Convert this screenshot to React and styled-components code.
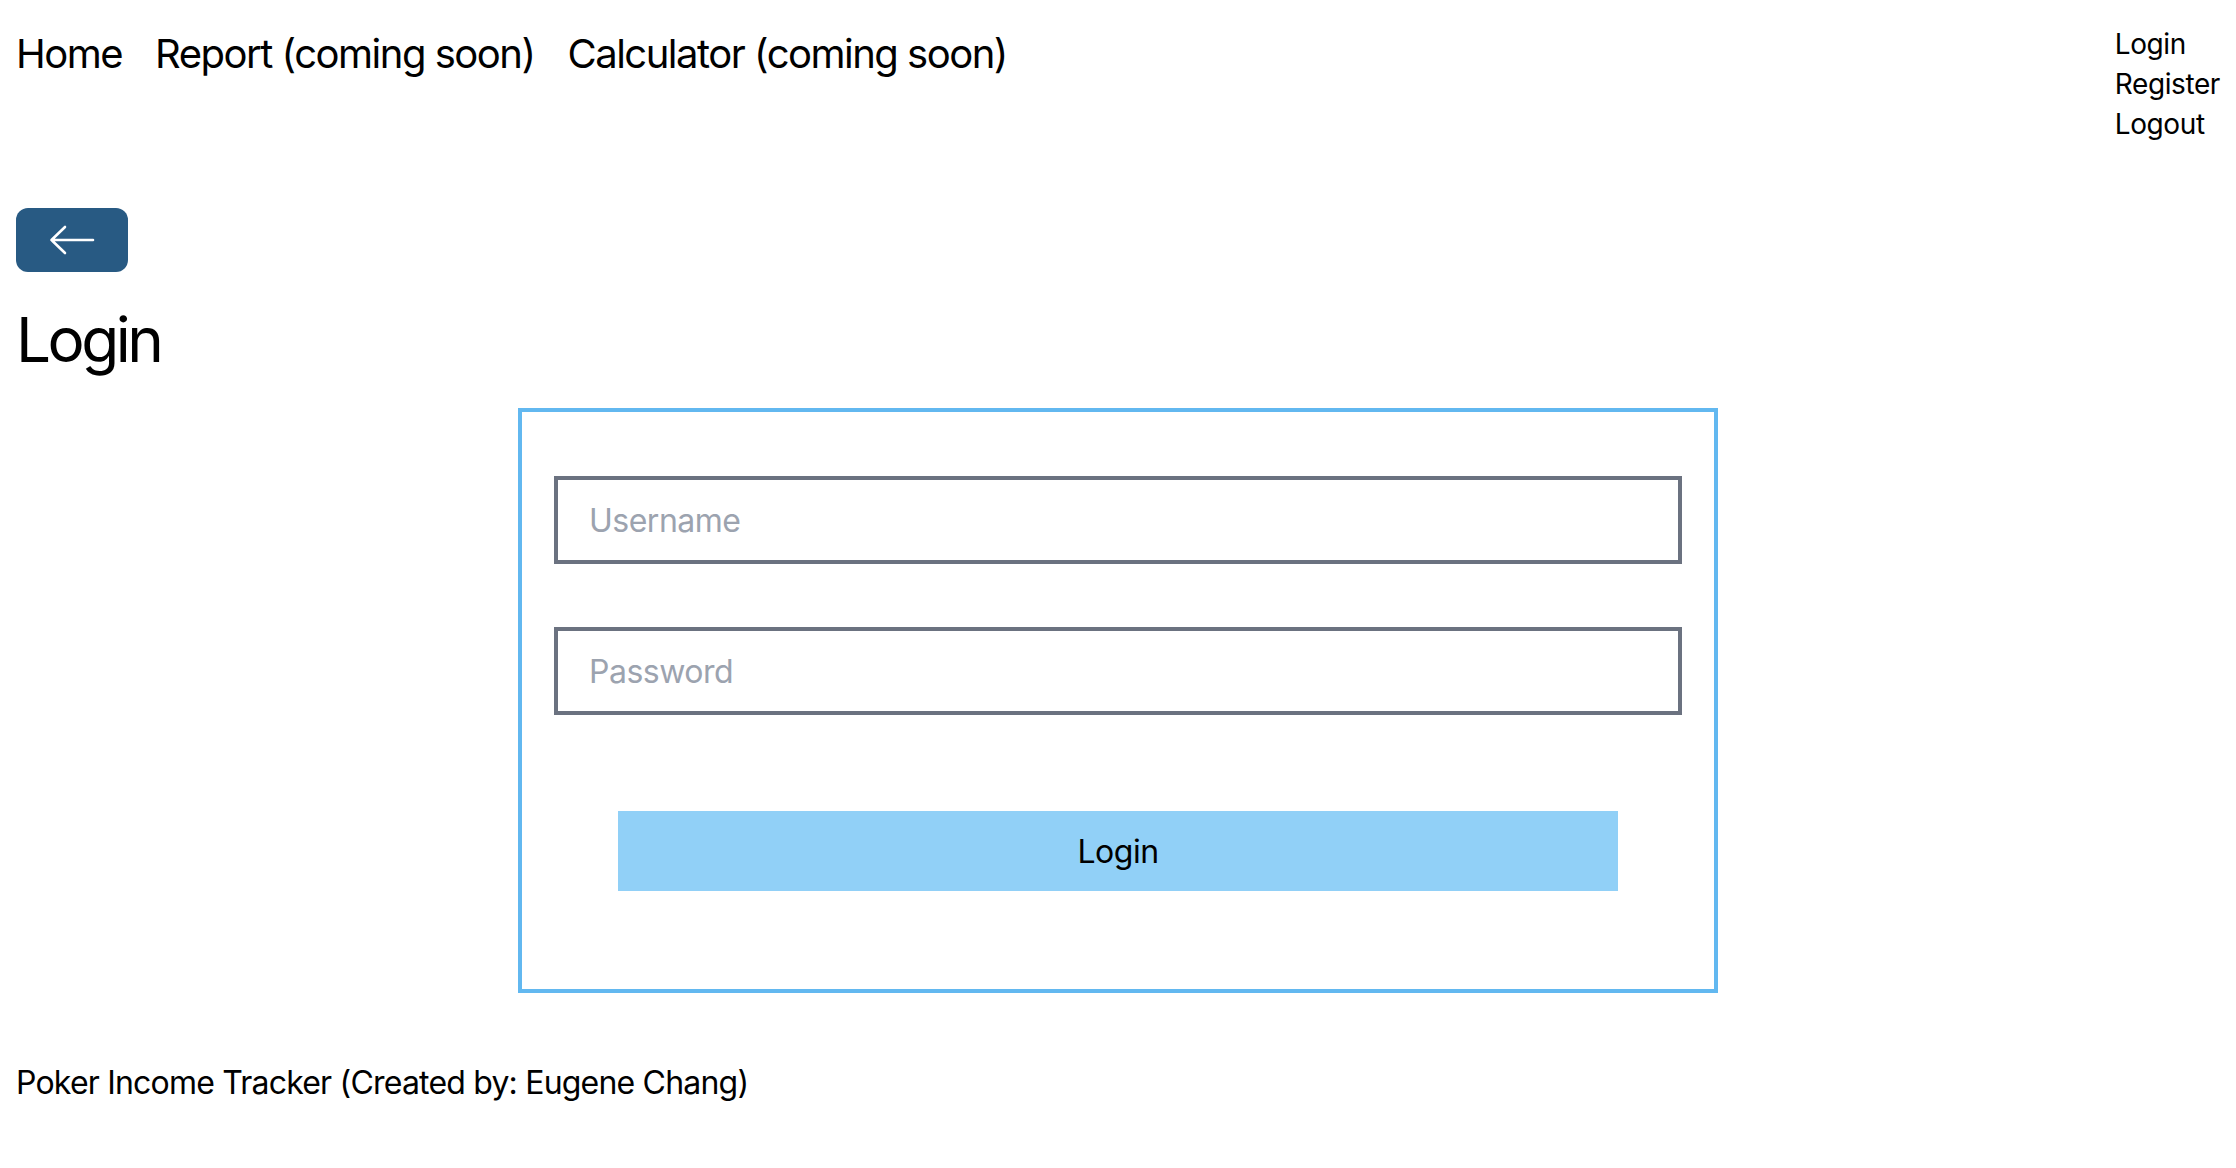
import React from "react";
import styled, { createGlobalStyle } from "styled-components";

const GlobalStyle = createGlobalStyle`
  * {
    box-sizing: border-box;
  }

  body {
    margin: 0;
    background: #ffffff;
    color: #000000;
    font-family: Inter, "Noto Sans", "Liberation Sans", sans-serif;
  }
`;

const Page = styled.div`
  padding: 16px;
  min-height: 100vh;
`;

const Header = styled.header`
  display: flex;
  justify-content: space-between;
  align-items: flex-start;
  padding-top: 8px;
`;

const Nav = styled.nav`
  display: flex;
  gap: 33px;
  padding-top: 2px;
`;

const NavLink = styled.a`
  font-size: 40px;
  line-height: 56px;
  letter-spacing: -1.5px;
  color: #000;
  text-decoration: none;
  cursor: pointer;
`;

const AuthLinks = styled.div`
  display: flex;
  flex-direction: column;
`;

const AuthLink = styled.a`
  font-size: 28px;
  line-height: 40px;
  letter-spacing: -0.4px;
  color: #000;
  text-decoration: none;
  cursor: pointer;
`;

const BackButton = styled.button`
  display: flex;
  align-items: center;
  justify-content: center;
  width: 112px;
  height: 64px;
  margin-top: 64px;
  border: none;
  border-radius: 12px;
  background: #285a83;
  cursor: pointer;
  padding: 0;
`;

const Title = styled.h1`
  margin: 36px 0 0;
  font-size: 62px;
  line-height: 64px;
  letter-spacing: -3.5px;
  font-weight: 400;
`;

const FormBox = styled.form`
  width: 1200px;
  margin: 36px auto 0;
  border: 4px solid #62b8f0;
  padding: 64px 32px 98px;
  display: flex;
  flex-direction: column;
  align-items: center;
`;

const Input = styled.input`
  width: 100%;
  height: 88px;
  margin-top: ${(p) => (p.$first ? "0" : "63px")};
  border: 4px solid #6b7280;
  border-radius: 0;
  padding: 0 31px;
  font-family: inherit;
  font-size: 32px;
  letter-spacing: -0.5px;
  color: #111827;
  outline: none;

  &::placeholder {
    color: #9ca3af;
  }
`;

const SubmitButton = styled.button`
  width: 1000px;
  height: 80px;
  margin-top: 96px;
  border: none;
  background: #91d0f7;
  font-family: inherit;
  font-size: 32px;
  letter-spacing: -0.5px;
  color: #000;
  cursor: pointer;
`;

const Footer = styled.footer`
  margin-top: 66px;
  font-size: 32px;
  line-height: 48px;
  letter-spacing: -0.8px;
`;

const ArrowLeft = () => (
  <svg width="46" height="30" viewBox="0 0 46 30" fill="none">
    <path
      d="M16 2 L2.5 15 L16 28 M2.5 15 H44"
      stroke="#ffffff"
      strokeWidth="2.6"
      strokeLinecap="round"
      strokeLinejoin="round"
    />
  </svg>
);

const App = () => {
  return (
    <Page>
      <GlobalStyle />
      <Header>
        <Nav>
          <NavLink>Home</NavLink>
          <NavLink>Report (coming soon)</NavLink>
          <NavLink>Calculator (coming soon)</NavLink>
        </Nav>
        <AuthLinks>
          <AuthLink>Login</AuthLink>
          <AuthLink>Register</AuthLink>
          <AuthLink>Logout</AuthLink>
        </AuthLinks>
      </Header>
      <BackButton type="button" aria-label="Back">
        <ArrowLeft />
      </BackButton>
      <Title>Login</Title>
      <FormBox onSubmit={(e) => e.preventDefault()}>
        <Input $first type="text" placeholder="Username" />
        <Input type="password" placeholder="Password" />
        <SubmitButton type="submit">Login</SubmitButton>
      </FormBox>
      <Footer>Poker Income Tracker (Created by: Eugene Chang)</Footer>
    </Page>
  );
};

export default App;
